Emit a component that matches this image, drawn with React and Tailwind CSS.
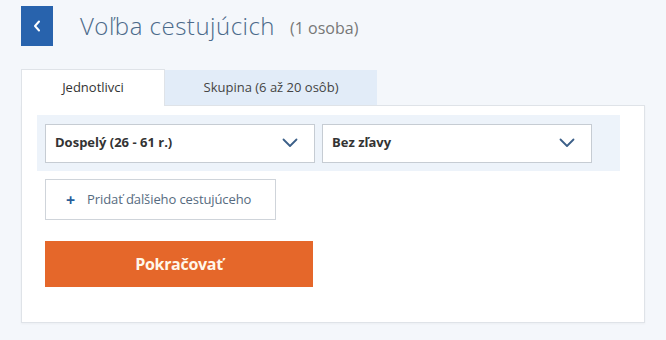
import { useState } from "react";

function Chevron() {
  return (
    <svg width="16" height="10" viewBox="0 0 16 10" fill="none" className="shrink-0">
      <path d="M1.5 1.5 L8 8 L14.5 1.5" stroke="#3b5f88" strokeWidth="1.8" strokeLinecap="round" strokeLinejoin="round" />
    </svg>
  );
}

function Select({ label }) {
  return (
    <button className="flex h-[39px] w-[270px] items-center justify-between border border-[#c6ccd3] bg-white pl-[9px] pr-[16px] text-left text-[13px] font-bold text-[#333]">
      <span>{label}</span>
      <Chevron />
    </button>
  );
}

export default function App() {
  const [tab, setTab] = useState("single");

  return (
    <div
      className="h-[340px] w-[666px] overflow-hidden bg-[#f4f7fb] pl-[21px] pt-[6px]"
      style={{ fontFamily: '"Open Sans", "Liberation Sans", sans-serif' }}
    >
      <div className="flex h-[40px] items-center">
        <button className="flex h-[40px] w-[32px] items-center justify-center bg-[#2863ad]">
          <svg width="8" height="12" viewBox="0 0 8 12" fill="none">
            <path d="M6 1.5 L2 6 L6 10.5" stroke="white" strokeWidth="2" strokeLinecap="round" strokeLinejoin="round" />
          </svg>
        </button>
        <h1 className="ml-[27px] text-[24px] font-light tracking-[0.5px] text-[#4b6a8a]">Voľba cestujúcich</h1>
        <span className="ml-[15px] mt-[4px] text-[16px] text-[#777]">(1 osoba)</span>
      </div>

      <div className="mt-[23px] flex h-[36px] items-end">
        <button
          onClick={() => setTab("single")}
          className="relative z-10 -mb-px flex h-[37px] w-[144px] items-center justify-center border border-b-0 border-[#dfe3e8] bg-white text-[13px] text-[#333]"
        >
          Jednotlivci
        </button>
        <button
          onClick={() => setTab("group")}
          className="flex h-[35px] w-[212px] items-center justify-center bg-[#e2ecf8] text-[13px] text-[#444]"
        >
          Skupina (6 až 20 osôb)
        </button>
      </div>

      <div className="h-[218px] w-[624px] border border-[#dfe3e8] bg-white px-[15px] pt-[9px] shadow-[0_1px_2px_rgba(0,0,0,0.04)]">
        <div className="flex h-[56px] w-[583px] items-center gap-[7px] bg-[#edf3fa] pl-[8px]">
          <Select label="Dospelý (26 - 61 r.)" />
          <Select label="Bez zľavy" />
        </div>

        <button className="ml-[8px] mt-[8px] flex h-[41px] w-[231px] items-center border border-[#cfd4da] bg-white pl-[20px] text-[13px] tracking-[-0.1px] text-[#566b80]">
          <span className="mr-[12px] text-[16px] font-bold leading-none text-[#2a5d9a]">+</span>
          Pridať ďalšieho cestujúceho
        </button>

        <button className="ml-[8px] mt-[21px] flex h-[46px] w-[268px] items-center justify-center bg-[#e5672a] text-[16px] font-bold tracking-[-0.3px] text-[#fff7ea]">
          Pokračovať
        </button>
      </div>
    </div>
  );
}
